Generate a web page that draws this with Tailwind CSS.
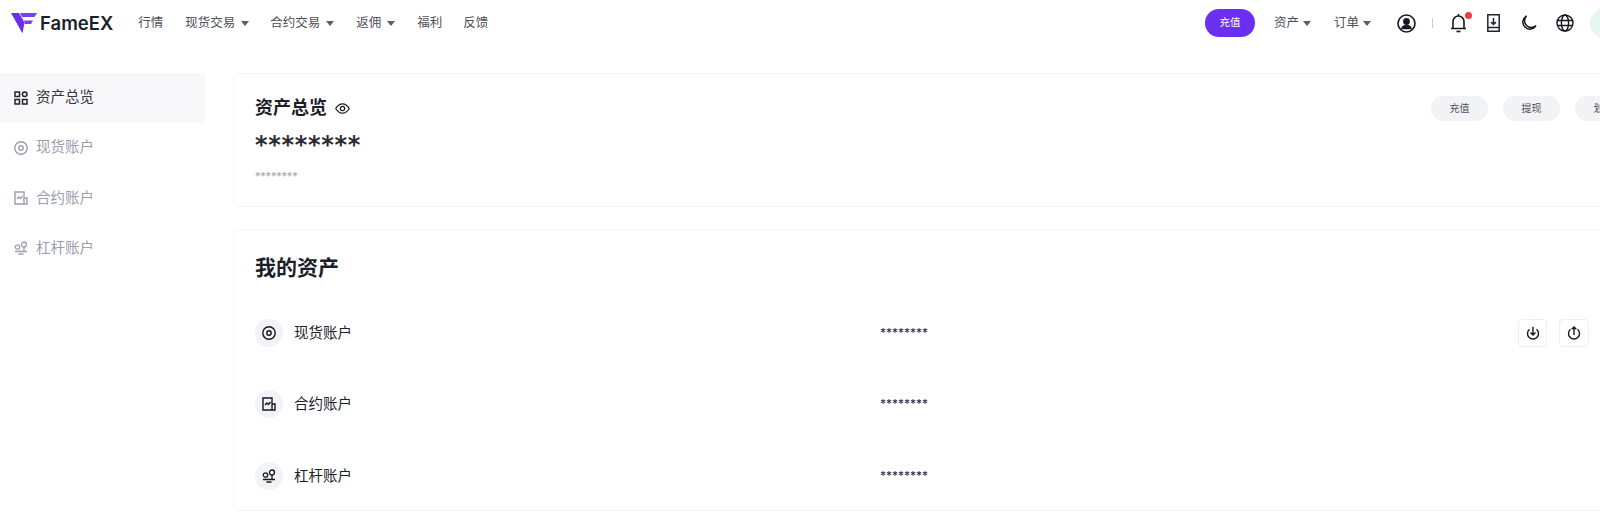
<!DOCTYPE html>
<html lang="zh-CN">
<head>
    <meta charset="UTF-8">
    <title>FameEX - 资产总览</title>
    <script src="https://cdn.jsdelivr.net/npm/@tailwindcss/browser@4"></script>
</head>
<body class="bg-white h-[512px] w-[1600px] overflow-hidden font-['Inter','Noto_Sans_CJK_SC',sans-serif] text-[#1c1f2b]">
    <!-- Header -->
    <header class="h-[46px] flex items-center pl-[11px] text-[12.5px] text-[#4d4f57]">
        <svg class="w-[26px] h-[21px]" viewBox="0 0 26 21">
            <path d="M0 0h8l5.500 9.500 -2 11z" fill="#6f2cf0"/>
            <path d="M9 0h17l-2.500 4h-12.500z" fill="#7b3ff2"/>
            <path d="M13 7.500h9l-2 3.500h-6z" fill="#7b3ff2"/>
        </svg>
        <span class="ml-[3px] text-[18.500px] font-semibold leading-none text-[#1c1f2b]">FameEX</span>
        <nav class="ml-[25px] flex items-center gap-[21px]">
            <a>行情</a>
            <a class="flex items-center gap-[6px] ml-[1px]">现货交易<i class="w-0 h-0 border-x-[4px] border-x-transparent border-t-[5px] border-t-[#5c5e66]"></i></a>
            <a class="flex items-center gap-[6px]">合约交易<i class="w-0 h-0 border-x-[4px] border-x-transparent border-t-[5px] border-t-[#5c5e66]"></i></a>
            <a class="flex items-center gap-[6px] ml-[1px]">返佣<i class="w-0 h-0 border-x-[4px] border-x-transparent border-t-[5px] border-t-[#5c5e66]"></i></a>
            <a class="ml-[1px]">福利</a>
            <a>反馈</a>
        </nav>
        <div class="ml-auto flex items-center">
            <button class="w-[50px] h-[28px] rounded-full bg-[#6a2ff0] text-white text-[10.5px]">充值</button>
            <a class="ml-[19px] flex items-center gap-[4px]">资产<i class="w-0 h-0 border-x-[4px] border-x-transparent border-t-[5px] border-t-[#5c5e66]"></i></a>
            <a class="ml-[23px] flex items-center gap-[4px]">订单<i class="w-0 h-0 border-x-[4px] border-x-transparent border-t-[5px] border-t-[#5c5e66]"></i></a>
            <!-- user -->
            <svg class="ml-[26px] w-[19px] h-[19px]" viewBox="0 0 19 19" fill="none" stroke="#16181f" stroke-width="1.600">
                <circle cx="9.500" cy="9.500" r="8.500"/>
                <circle cx="9.500" cy="7.500" r="2.600" fill="#16181f"/>
                <path d="M5 14.500c.5-2 2.500-3 4.500-3s4 1 4.500 3z" fill="#16181f"/>
            </svg>
            <span class="ml-[16px] w-px h-[10px] bg-[#c9ccd6]"></span>
            <!-- bell -->
            <div class="relative ml-[17px] w-[17px] h-[20px]">
                <svg class="w-[17px] h-[20px]" viewBox="0 0 17 20" fill="none" stroke="#16181f" stroke-width="1.600">
                    <path d="M1 15.500h15M3 15.500v-7a5.500 5.500 0 0 1 11 0v7M8.500 1v2"/>
                    <path d="M6.500 18.500h4"/>
                </svg>
                <span class="absolute -top-[1px] -right-[5px] w-[7px] h-[7px] rounded-full bg-[#ee3b3b]"></span>
            </div>
            <!-- download -->
            <svg class="ml-[20px] w-[13px] h-[18px]" viewBox="0 0 13 18" fill="none" stroke="#22242c" stroke-width="1.500">
                <path d="M.8.800h11.400v16.400h-11.400zM.8 13.500h11.400M6.500 4v6M4 8l2.500 2.500 2.500-2.500"/>
            </svg>
            <!-- moon -->
            <svg class="ml-[21px] w-[16px] h-[16px]" viewBox="0 0 16 16" fill="none" stroke="#16181f" stroke-width="1.500">
                <path d="M5.500 1a7 7 0 1 0 9.500 9.500a6.500 6.500 0 0 1-9.500-9.500z"/>
            </svg>
            <!-- globe -->
            <svg class="ml-[19px] w-[18px] h-[18px]" viewBox="0 0 18 18" fill="none" stroke="#16181f" stroke-width="1.400">
                <circle cx="9" cy="9" r="8"/>
                <ellipse cx="9" cy="9" rx="3.600" ry="8"/>
                <path d="M1.500 6.500h15M1.500 11.500h15"/>
            </svg>
            <span class="ml-[16px] -mr-[20px] w-[30px] h-[30px] rounded-full bg-[#e6f7f1]"></span>
        </div>
    </header>

    <div class="flex pt-[27px]">
        <!-- Sidebar -->
        <aside class="w-[205px] shrink-0 text-[14.500px] text-[#9a9eb0]">
            <a class="h-[50px] flex items-center pl-[14px] gap-[8px] bg-[#f8f8fb] text-[#33353f]">
                <svg class="w-[14px] h-[14px]" viewBox="0 0 14 14" fill="none" stroke="#22242c" stroke-width="1.500">
                    <path d="M1 1h4.500v4.500h-4.500zM1 8.500h4.500v4.500h-4.500zM8.500 8.500h4.500v4.500h-4.500z"/>
                    <circle cx="10.700" cy="3.200" r="2.300"/>
                </svg>
                <span class="-mt-[3px]">资产总览</span>
            </a>
            <a class="h-[50px] flex items-center pl-[14px] gap-[8px]">
                <svg class="w-[14px] h-[14px]" viewBox="0 0 14 14" fill="none" stroke="#9a9eb0" stroke-width="1.400">
                    <circle cx="7" cy="7" r="6.200"/>
                    <circle cx="7" cy="7" r="2.200"/>
                </svg>
                <span class="-mt-[2px]">现货账户</span>
            </a>
            <a class="h-[50px] flex items-center pl-[14px] gap-[8px]">
                <svg class="w-[14px] h-[14px]" viewBox="0 0 14 14" fill="none" stroke="#9a9eb0" stroke-width="1.400">
                    <path d="M1 1h9v12h-9zM10 7h3v6h-3M3 8l2-2 1.500 1.500 2-2.500"/>
                </svg>
                <span>合约账户</span>
            </a>
            <a class="h-[50px] flex items-center pl-[14px] gap-[8px]">
                <svg class="w-[14px] h-[14px]" viewBox="0 0 14 14" fill="none" stroke="#9a9eb0" stroke-width="1.300">
                    <circle cx="3.500" cy="6" r="2.200"/>
                    <circle cx="10" cy="3.500" r="2.500"/>
                    <path d="M1 10.500h12M10 6v4.500M4.500 13h5"/>
                </svg>
                <span>杠杆账户</span>
            </a>
        </aside>

        <!-- Main -->
        <main class="ml-[28px] w-[1420px] shrink-0 flex flex-col gap-[22px]">
            <section class="h-[134px] rounded-[8px] border border-[#f6f6f8] pl-[21px] pr-[20px] flex justify-between">
                <div>
                    <div class="mt-[21px] flex items-center gap-[8px] text-[18px] leading-[26px] font-semibold">
                        资产总览
                        <svg class="w-[15px] h-[11px]" viewBox="0 0 15 11" fill="none" stroke="#16181f" stroke-width="1.200">
                            <path d="M.7 5.500c2-3.200 4.200-4.700 6.800-4.700s4.800 1.500 6.800 4.700c-2 3.200-4.200 4.700-6.800 4.700s-4.800-1.500-6.800-4.700z"/>
                            <circle cx="7.500" cy="5.500" r="2.200"/>
                        </svg>
                    </div>
                    <p class="mt-[9px] text-[24px] leading-[30px] font-semibold font-['DejaVu_Sans',sans-serif] tracking-[.7px] text-[#2a2c36]">********</p>
                    <p class="mt-[9px] text-[11px] leading-[14px] text-[#a0a2ad] tracking-[-.2px]">********</p>
                </div>
                <div class="mt-[22px] flex gap-[15px] text-[10px] text-[#4d4f57]">
                    <button class="w-[57px] h-[25px] rounded-full bg-[#f2f3f7]">充值</button>
                    <button class="w-[57px] h-[25px] rounded-full bg-[#f2f3f7]">提现</button>
                    <button class="w-[57px] h-[25px] rounded-full bg-[#f2f3f7]">划转</button>
                </div>
            </section>

            <section class="h-[282px] rounded-[8px] border border-[#f6f6f8] pl-[21px] pr-[40px]">
                <h2 class="mt-[23px] text-[21px] leading-[30px] font-semibold">我的资产</h2>
                <div class="mt-[14px] flex flex-col text-[14.500px]">
                    <div class="h-[71.500px] flex items-center">
                        <span class="w-[28px] h-[28px] rounded-full bg-[#f2f3f7] flex items-center justify-center">
                            <svg class="w-[14px] h-[14px]" viewBox="0 0 14 14" fill="none" stroke="#16181f" stroke-width="1.400">
                                <circle cx="7" cy="7" r="6.200"/>
                                <circle cx="7" cy="7" r="2.200"/>
                            </svg>
                        </span>
                        <span class="ml-[11px] w-[586px]">现货账户</span>
                        <span class="text-[12px] text-[#1c2540]">********</span>
                        <div class="ml-auto flex gap-[12px] mr-[23px]">
                            <button class="w-[29px] h-[28px] rounded-[4px] border border-[#eeeff3] flex items-center justify-center">
                                <svg class="w-[14px] h-[14px]" viewBox="0 0 14 14" fill="none" stroke="#16181f" stroke-width="1.400">
                                    <path d="M3.500 3.300A5.500 5.500 0 1 0 10.500 3.300M7 .8v8.200M4.500 6.500l2.500 2.500 2.500-2.500"/>
                                </svg>
                            </button>
                            <button class="w-[30px] h-[28px] rounded-[4px] border border-[#eeeff3] flex items-center justify-center">
                                <svg class="w-[14px] h-[14px]" viewBox="0 0 14 14" fill="none" stroke="#16181f" stroke-width="1.400">
                                    <path d="M3.500 3.300A5.500 5.500 0 1 0 10.500 3.300M7 9V1M4.700 3.300l2.300-2.300 2.300 2.300"/>
                                </svg>
                            </button>
                        </div>
                    </div>
                    <div class="h-[71.500px] flex items-center">
                        <span class="w-[28px] h-[28px] rounded-full bg-[#f2f3f7] flex items-center justify-center">
                            <svg class="w-[14px] h-[14px]" viewBox="0 0 14 14" fill="none" stroke="#16181f" stroke-width="1.400">
                                <path d="M1 1h9v12h-9zM10 7h3v6h-3M3 8l2-2 1.500 1.500 2-2.500"/>
                            </svg>
                        </span>
                        <span class="ml-[11px] w-[586px]">合约账户</span>
                        <span class="text-[12px] text-[#1c2540]">********</span>
                    </div>
                    <div class="h-[71.500px] flex items-center">
                        <span class="w-[28px] h-[28px] rounded-full bg-[#f2f3f7] flex items-center justify-center">
                            <svg class="w-[14px] h-[14px]" viewBox="0 0 14 14" fill="none" stroke="#16181f" stroke-width="1.300">
                                <circle cx="3.500" cy="6" r="2.200"/>
                                <circle cx="10" cy="3.500" r="2.500"/>
                                <path d="M1 10.500h12M10 6v4.500M4.500 13h5"/>
                            </svg>
                        </span>
                        <span class="ml-[11px] w-[586px]">杠杆账户</span>
                        <span class="text-[12px] text-[#1c2540]">********</span>
                    </div>
                </div>
            </section>
        </main>
    </div>
</body>
</html>
